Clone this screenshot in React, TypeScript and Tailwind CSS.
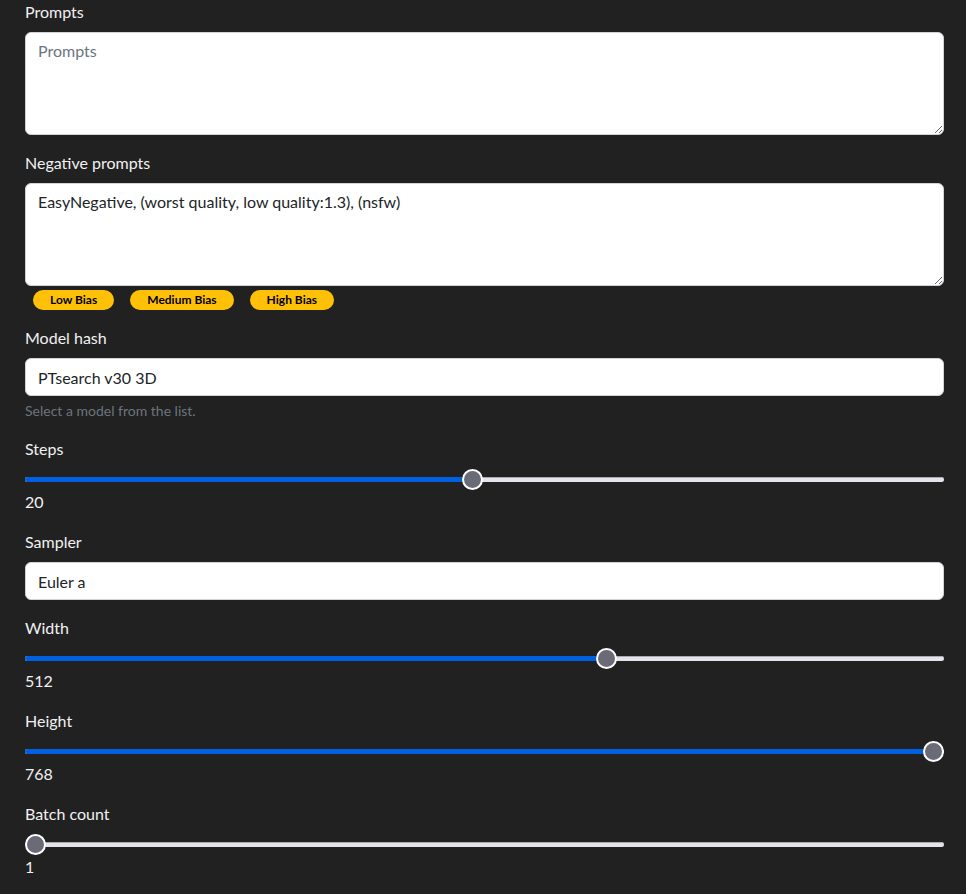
import React from 'react';

const font = { fontFamily: '"Segoe UI", Lato, "Open Sans", sans-serif' };

interface SliderProps {
  label: string;
  value: number;
  min: number;
  max: number;
}

const Slider: React.FC<SliderProps> = ({ label, value, min, max }) => {
  const frac = (value - min) / (max - min);
  return (
    <div className="mb-4">
      <div className="text-[16px] leading-6 text-[#f1f1f1]">{label}</div>
      <div className="relative h-[29px]">
        <div className="absolute left-0 right-0 top-[16px] flex h-[5px] overflow-hidden rounded-full bg-[#e4e4ea] shadow-[inset_0_1px_0_#a9a9b2]">
          <div className="h-full bg-[#0060df]" style={{ width: `calc(${frac} * (100% - 20px) + 10px)` }} />
        </div>
        <div
          className="absolute top-[8px] h-[21px] w-[21px] rounded-full border-2 border-white bg-[#6b6b78]"
          style={{ left: `calc(${frac} * (100% - 21px))` }}
        />
      </div>
      <div className="text-[16px] leading-6 text-[#f1f1f1]">{value}</div>
    </div>
  );
};

const Badge: React.FC<{ children: React.ReactNode }> = ({ children }) => (
  <span className="mx-2 inline-flex h-[20px] items-center rounded-full bg-[#ffc107] px-[17px] text-[12px] font-bold text-black">
    {children}
  </span>
);

export default function App() {
  return (
    <div className="min-h-screen bg-[#212121] px-[25px]" style={font}>
      <div className="w-[919px]">
        <div className="mb-4">
          <label className="mb-2 block text-[16px] leading-6 text-[#f1f1f1]">Prompts</label>
          <textarea
            placeholder="Prompts"
            className="block h-[103px] w-full rounded-md border border-[#ced4da] bg-white px-3 py-[6px] text-[16px] leading-6 text-[#212529] placeholder:text-[#6c757d] outline-none"
          />
        </div>

        <div className="mb-4">
          <label className="mb-2 block text-[16px] leading-6 text-[#f1f1f1]">Negative prompts</label>
          <textarea
            defaultValue="EasyNegative, (worst quality, low quality:1.3), (nsfw)"
            className="block h-[103px] w-full rounded-md border border-[#ced4da] bg-white px-3 py-[6px] text-[16px] leading-6 text-[#212529] outline-none"
          />
          <div className="mt-[4px] flex">
            <Badge>Low Bias</Badge>
            <Badge>Medium Bias</Badge>
            <Badge>High Bias</Badge>
          </div>
        </div>

        <div className="mb-4">
          <label className="mb-2 block text-[16px] leading-6 text-[#f1f1f1]">Model hash</label>
          <input
            defaultValue="PTsearch v30 3D"
            className="block h-[38px] w-full rounded-md border border-[#ced4da] bg-white px-3 text-[16px] text-[#212529] outline-none"
          />
          <div className="mt-1 text-[14px] leading-[21px] text-[#6c757d]">Select a model from the list.</div>
        </div>

        <Slider label="Steps" value={20} min={1} max={40} />

        <div className="mb-4">
          <label className="mb-2 block text-[16px] leading-6 text-[#f1f1f1]">Sampler</label>
          <input
            defaultValue="Euler a"
            className="block h-[38px] w-full rounded-md border border-[#ced4da] bg-white px-3 text-[16px] text-[#212529] outline-none"
          />
        </div>

        <Slider label="Width" value={512} min={64} max={768} />
        <Slider label="Height" value={768} min={64} max={768} />
        <Slider label="Batch count" value={1} min={1} max={8} />
      </div>
    </div>
  );
}
